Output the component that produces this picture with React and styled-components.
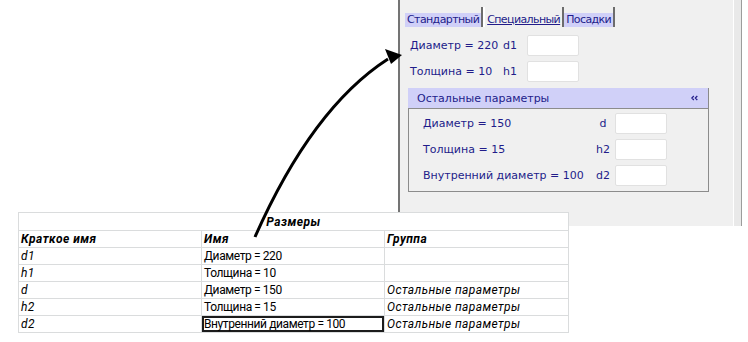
import React from 'react';
import styled, {createGlobalStyle} from 'styled-components';

const GlobalStyle=createGlobalStyle`
  html,body{
    margin:0;
    padding:0;
    background:#ffffff;
    overflow:hidden;
  }
`;

const NAVY='#221c8a';
const LAVENDER='#d0d0f8';

const Canvas=styled.div`
  position:relative;
  width:748px;
  height:342px;
`;

const Panel=styled.div`
  display:flex;
  margin-left:398px;
  width:344px;
  height:226px;
  border-left:2px solid #747474;
  box-sizing:border-box;
`;

const PanelBody=styled.div`
  flex:1;
  background:#f0f0f0;
  font-family:'DejaVu Sans',Verdana,sans-serif;
  font-size:11px;
  color:${NAVY};
`;

const PanelEdge=styled.div`
  width:7px;
  background:#e9e9e9;
  border-left:1px solid #ffffff;
  border-right:1px solid #9c9c9c;
`;

const TabBar=styled.div`
  display:flex;
  align-items:flex-end;
  height:20px;
  margin:7px 0 0 5px;
  letter-spacing:-0.6px;
`;

const Tab=styled.div`
  display:flex;
  align-items:flex-end;
  height:20px;
  border-right:2px solid #6c6c6c;
  border-left:${p=>p.$active?'2px solid #ffffff':'none'};
`;

const TabFace=styled.span`
  display:block;
  height:14px;
  line-height:14px;
  padding:0 2px;
  background:${p=>p.$active?'transparent':LAVENDER};
  text-decoration:${p=>p.$active?'underline':'none'};
  white-space:nowrap;
`;

const FieldGrid=styled.div`
  display:grid;
  grid-template-columns:${p=>p.$cols};
  row-gap:5px;
  align-items:center;
`;

const TopFields=styled(FieldGrid)`
  margin:8px 0 0 10px;
`;

const Label=styled.span`
  white-space:nowrap;
`;

const Code=styled.span`
  text-align:${p=>p.$center?'center':'left'};
`;

const Field=styled.div`
  width:52px;
  height:21px;
  box-sizing:border-box;
  background:#ffffff;
  border:1px solid #e1e1e1;
  border-radius:2px;
`;

const Group=styled.div`
  width:301px;
  margin:6px 0 0 8px;
`;

const GroupHeader=styled.div`
  display:flex;
  align-items:center;
  justify-content:space-between;
  height:20px;
  box-sizing:border-box;
  padding:0 10px 0 9px;
  background:${LAVENDER};
  border-right:1px solid #8a8a8a;
`;

const GroupBody=styled(FieldGrid)`
  border:1px solid #8c8c8c;
  padding:4px 0 5px 14px;
`;

const Sheet=styled.table`
  position:relative;
  z-index:1;
  margin:-14px 0 0 18px;
  width:550px;
  table-layout:fixed;
  border-collapse:collapse;
  background:#ffffff;
  font-family:Roboto,'Liberation Sans',sans-serif;
  font-size:12px;
  color:#000000;
`;

// ширина букв подогнана под Calibri из оригинала
const spacing=p=>{
  if(p.$bold) return '0.5px';
  if(p.$italic) return '0.4px';
  return '-0.4px';
};

const Cell=styled.td`
  height:${p=>p.$tall?'17px':'16px'};
  padding:0 2px;
  border:1px solid #dadcdd;
  line-height:14px;
  white-space:nowrap;
  overflow:hidden;
  text-align:${p=>p.$center?'center':'left'};
  font-weight:${p=>p.$bold?700:400};
  font-style:${p=>p.$italic?'italic':'normal'};
  letter-spacing:${spacing};
  box-shadow:${p=>p.$selected?'inset 0 0 0 2px #1c1c1c':'none'};
`;

const ArrowLayer=styled.svg`
  position:absolute;
  left:0;
  top:0;
  z-index:2;
  pointer-events:none;
`;

function Chevrons(){
  return (
    <svg width="7" height="6" viewBox="0 0 7 6">
      <path d="M2.8 1 L0.8 3 L2.8 5 M6.3 1 L4.3 3 L6.3 5" fill="none" stroke={NAVY} strokeWidth="1.2"/>
    </svg>
  );
}

const tabs=[
  {name:'Стандартный'},
  {name:'Специальный',active:true},
  {name:'Посадки'},
];

const topFields=[
  {label:'Диаметр = 220',code:'d1'},
  {label:'Толщина = 10',code:'h1'},
];

const groupFields=[
  {label:'Диаметр = 150',code:'d'},
  {label:'Толщина = 15',code:'h2'},
  {label:'Внутренний диаметр = 100',code:'d2'},
];

const rows=[
  {code:'d1',name:'Диаметр = 220',group:''},
  {code:'h1',name:'Толщина = 10',group:''},
  {code:'d',name:'Диаметр = 150',group:'Остальные параметры'},
  {code:'h2',name:'Толщина = 15',group:'Остальные параметры'},
  {code:'d2',name:'Внутренний диаметр = 100',group:'Остальные параметры',selected:true},
];

function App(){
  return (
    <Canvas>
      <GlobalStyle/>
      <Panel>
        <PanelBody>
          <TabBar>
            {tabs.map(t=>(
              <Tab key={t.name} $active={t.active}>
                <TabFace $active={t.active}>{t.name}</TabFace>
              </Tab>
            ))}
          </TabBar>

          <TopFields $cols="93px 24px 52px">
            {topFields.map(f=>(
              <React.Fragment key={f.code}>
                <Label>{f.label}</Label>
                <Code>{f.code}</Code>
                <Field/>
              </React.Fragment>
            ))}
          </TopFields>

          <Group>
            <GroupHeader>
              <span>Остальные параметры</span>
              <Chevrons/>
            </GroupHeader>
            <GroupBody $cols="168px 24px 52px">
              {groupFields.map(f=>(
                <React.Fragment key={f.code}>
                  <Label>{f.label}</Label>
                  <Code $center>{f.code}</Code>
                  <Field/>
                </React.Fragment>
              ))}
            </GroupBody>
          </Group>
        </PanelBody>
        <PanelEdge/>
      </Panel>

      <Sheet>
        <colgroup>
          <col style={{width:183}}/>
          <col style={{width:183}}/>
          <col style={{width:184}}/>
        </colgroup>
        <tbody>
          <tr>
            <Cell colSpan={3} $tall $center $bold $italic>Размеры</Cell>
          </tr>
          <tr>
            <Cell $bold $italic>Краткое имя</Cell>
            <Cell $bold $italic>Имя</Cell>
            <Cell $bold $italic>Группа</Cell>
          </tr>
          {rows.map(r=>(
            <tr key={r.code}>
              <Cell $italic>{r.code}</Cell>
              <Cell $selected={r.selected}>{r.name}</Cell>
              <Cell $italic>{r.group}</Cell>
            </tr>
          ))}
        </tbody>
      </Sheet>

      {/* стрелка от таблицы к диалогу */}
      <ArrowLayer width="748" height="342" viewBox="0 0 748 342">
        <path d="M255 237 Q 312 108 388 59" fill="none" stroke="#000" strokeWidth="3"/>
        <polygon points="385,49 402,55 391,64" fill="#000"/>
      </ArrowLayer>
    </Canvas>
  );
}

export default App;
